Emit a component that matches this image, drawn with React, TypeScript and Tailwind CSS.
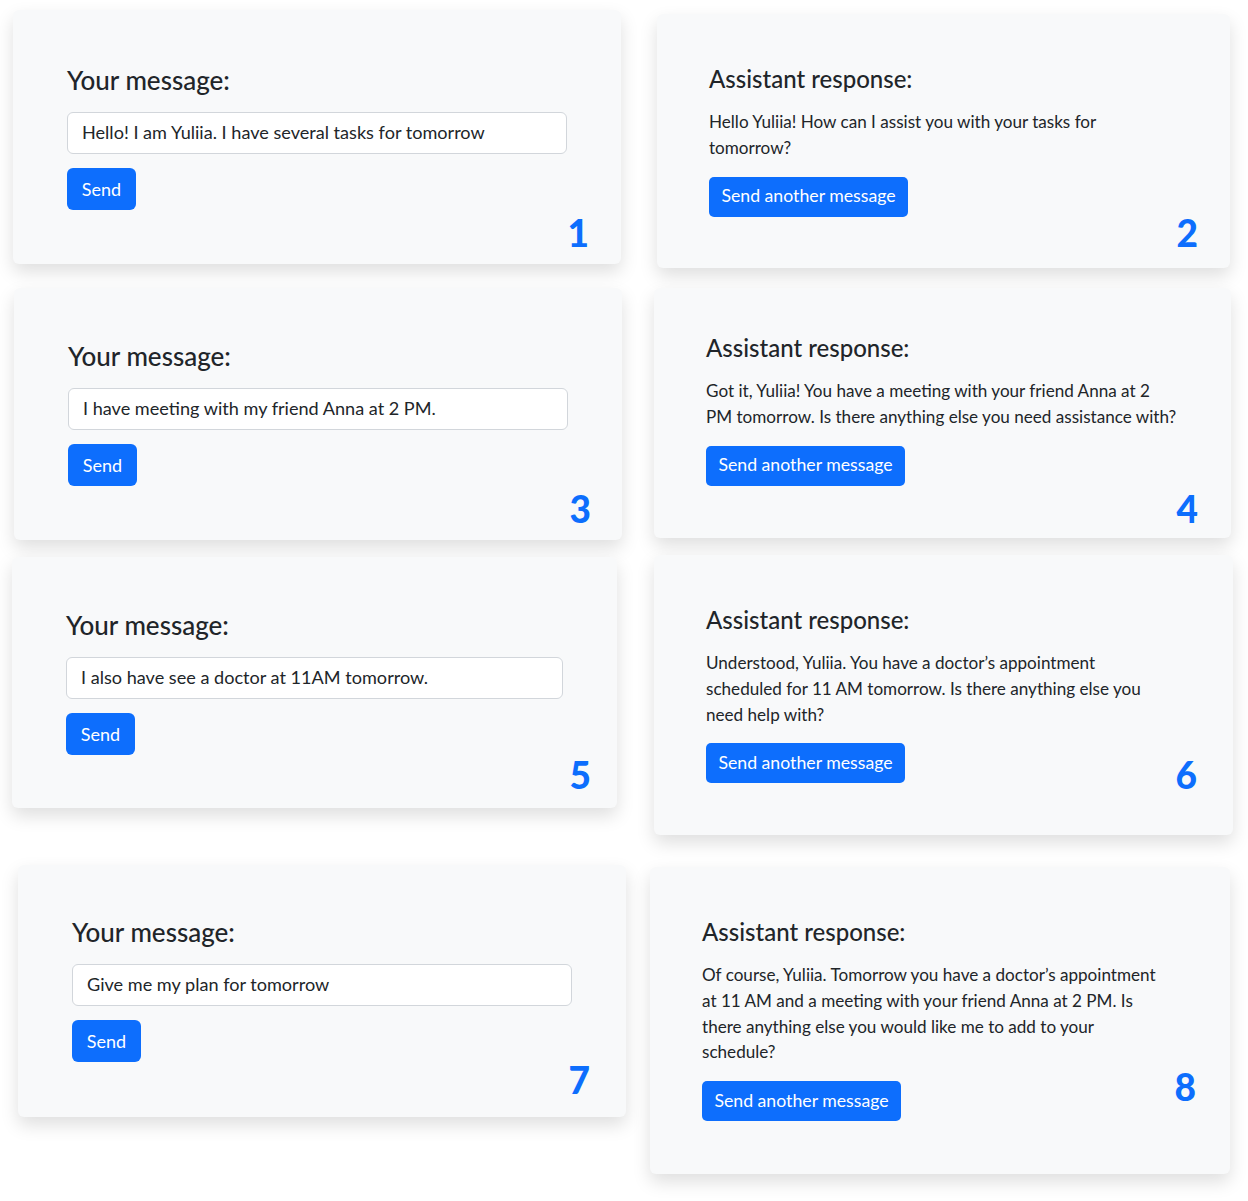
import React from 'react';

type UserCard = {
  kind: 'user';
  n: number;
  text: string;
  className: string;
  inputW: string;
  numPos: string;
};

type BotCard = {
  kind: 'bot';
  n: number;
  lines: string[];
  className: string;
  numPos: string;
};

type CardData = UserCard | BotCard;

const rows: CardData[][] = [
  [
    {
      kind: 'user',
      n: 1,
      text: 'Hello! I am Yuliia. I have several tasks for tomorrow',
      className: 'ml-[13px] mt-[10px] w-[608px] h-[254px] pl-[54px] pt-[54px]',
      inputW: 'w-[500px]',
      numPos: 'right-[32px] bottom-[13px]',
    },
    {
      kind: 'bot',
      n: 2,
      lines: ['Hello Yuliia! How can I assist you with your tasks for', 'tomorrow?'],
      className: 'ml-[36px] mt-[14px] w-[573px] h-[254px] pl-[52px] pt-[49px]',
      numPos: 'right-[32px] bottom-[17px]',
    },
  ],
  [
    {
      kind: 'user',
      n: 3,
      text: 'I have meeting with my friend Anna at 2 PM.',
      className: 'ml-[14px] mt-[20px] w-[608px] h-[252px] pl-[54px] pt-[52px]',
      inputW: 'w-[500px]',
      numPos: 'right-[31px] bottom-[13px]',
    },
    {
      kind: 'bot',
      n: 4,
      lines: [
        'Got it, Yuliia! You have a meeting with your friend Anna at 2',
        'PM tomorrow. Is there anything else you need assistance with?',
      ],
      className: 'ml-[32px] mt-[20px] w-[577px] h-[250px] pl-[52px] pt-[44px]',
      numPos: 'right-[33px] bottom-[11px]',
    },
  ],
  [
    {
      kind: 'user',
      n: 5,
      text: 'I also have see a doctor at 11AM tomorrow.',
      className: 'ml-[12px] mt-[17px] w-[605px] h-[251px] pl-[54px] pt-[52px]',
      inputW: 'w-[497px]',
      numPos: 'right-[26px] bottom-[15px]',
    },
    {
      kind: 'bot',
      n: 6,
      lines: [
        'Understood, Yuliia. You have a doctor\u2019s appointment',
        'scheduled for 11 AM tomorrow. Is there anything else you',
        'need help with?',
      ],
      className: 'ml-[37px] mt-[15px] w-[579px] h-[280px] pl-[52px] pt-[49px]',
      numPos: 'right-[36px] bottom-[42px]',
    },
  ],
  [
    {
      kind: 'user',
      n: 7,
      text: 'Give me my plan for tomorrow',
      className: 'ml-[18px] mt-[30px] w-[608px] h-[252px] pl-[54px] pt-[51px]',
      inputW: 'w-[500px]',
      numPos: 'right-[36px] bottom-[19px]',
    },
    {
      kind: 'bot',
      n: 8,
      lines: [
        'Of course, Yuliia. Tomorrow you have a doctor\u2019s appointment',
        'at 11 AM and a meeting with your friend Anna at 2 PM. Is',
        'there anything else you would like me to add to your',
        'schedule?',
      ],
      className: 'ml-[24px] mt-[32px] w-[580px] h-[307px] pl-[52px] pt-[49px]',
      numPos: 'right-[34px] bottom-[69px]',
    },
  ],
];

const Card: React.FC<{ card: CardData }> = ({ card }) => {
  return (
    <div
      className={`relative shrink-0 bg-[#f8f9fa] rounded-[6px] shadow-[0_8px_18px_rgba(0,0,0,0.13)] ${card.className}`}
    >
      {card.kind === 'user' ? (
        <>
          <h3 className="text-[26px] leading-[32px] font-medium text-[#212529]">Your message:</h3>
          <div
            className={`mt-[16px] h-[42px] ${card.inputW} flex items-center bg-white border border-[#d2d6db] rounded-[6px] px-[14px] text-[18.1px] text-[#212529]`}
          >
            {card.text}
          </div>
          <button className="mt-[14px] h-[42px] w-[69px] bg-[#0d6efd] text-white text-[18px] rounded-[6px]">
            Send
          </button>
        </>
      ) : (
        <>
          <h3 className="text-[24px] leading-[32px] font-medium text-[#212529]">Assistant response:</h3>
          <div className="mt-[14px] text-[17.1px] leading-[25.8px] text-[#212529]">
            {card.lines.map((l, i) => (
              <div key={i} className="whitespace-nowrap">
                {l}
              </div>
            ))}
          </div>
          <button className="mt-[16px] h-[40px] w-[199px] bg-[#0d6efd] text-white text-[17.7px] rounded-[5px]">
            Send another message
          </button>
        </>
      )}
      <span
        className={`absolute ${card.numPos} text-[37px] leading-none font-black text-[#0d6efd]`}
      >
        {card.n}
      </span>
    </div>
  );
};

export default function App() {
  return (
    <div className="w-[1248px] h-[1201px] bg-white overflow-hidden font-['Lato',sans-serif]">
      {rows.map((row, i) => (
        <div key={i} className="flex items-start">
          {row.map((c) => (
            <Card key={c.n} card={c} />
          ))}
        </div>
      ))}
    </div>
  );
}
